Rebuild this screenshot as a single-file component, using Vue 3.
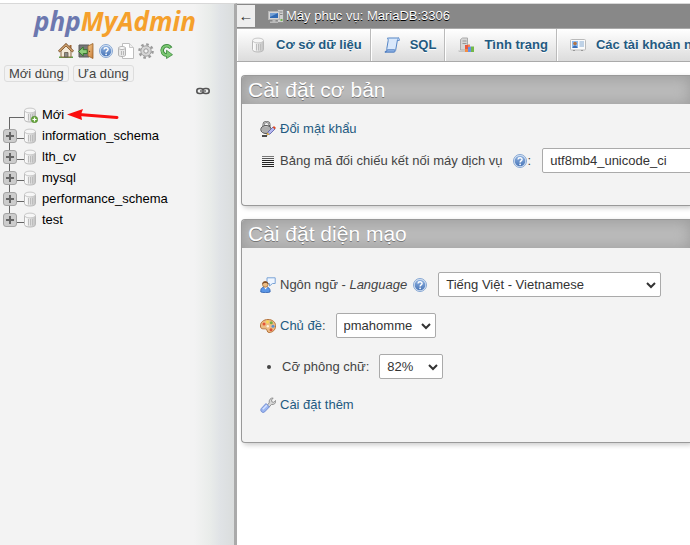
<script setup>
import { ref } from 'vue'

const tools = [
  { icon: 'home', label: 'Trang chủ' },
  { icon: 'exit', label: 'Đăng xuất' },
  { icon: 'help', label: 'Tài liệu phpMyAdmin' },
  { icon: 'docs', label: 'Tài liệu' },
  { icon: 'gear', label: 'Cài đặt bảng điều hướng' },
  { icon: 'reload', label: 'Tải lại' },
]
const databases = ['information_schema', 'lth_cv', 'mysql', 'performance_schema', 'test']
const tabs = [
  { icon: 'db', label: 'Cơ sở dữ liệu' },
  { icon: 'sql', label: 'SQL' },
  { icon: 'status', label: 'Tình trạng' },
  { icon: 'users', label: 'Các tài khoản người dùng' },
]
const collation = ref('utf8mb4_unicode_ci')
const language = ref('Tiếng Việt - Vietnamese')
const theme = ref('pmahomme')
const fontSize = ref('82%')
</script>

<template>
  <svg class="sprite" width="0" height="0" aria-hidden="true">
    <defs>
      <linearGradient id="gCyl" x1="0" x2="1" y1="0" y2="0">
        <stop offset="0" stop-color="#fff" /><stop offset=".45" stop-color="#e8e8e8" /><stop offset="1" stop-color="#c0c0c0" />
      </linearGradient>
      <linearGradient id="gHelp" x1="0" x2="0" y1="0" y2="1">
        <stop offset="0" stop-color="#8fb2e0" /><stop offset="1" stop-color="#4a76b8" />
      </linearGradient>
      <linearGradient id="gWood" x1="0" x2="1" y1="0" y2="1">
        <stop offset="0" stop-color="#f6cf95" /><stop offset="1" stop-color="#c77a34" />
      </linearGradient>
      <symbol id="i-db" viewBox="0 0 16 16">
        <path d="M2.500 3.500v9c0 1.600 2.400 2.500 5.500 2.500s5.500-.9 5.500-2.500v-9z" fill="url(#gCyl)" stroke="#b9b9b9" />
        <ellipse cx="8" cy="3.500" rx="5.500" ry="2.400" fill="#f6f6f6" stroke="#c8c8c8" />
        <path d="M6.500 7v6.500M8.500 7v6.500M10.500 7v6.500" stroke="#bdbdbd" />
      </symbol>
      <symbol id="i-newdb" viewBox="0 0 16 16">
        <use href="#i-db" width="16" height="16" />
        <circle cx="12.500" cy="12.500" r="3.200" fill="#69a83f" stroke="#4b8428" stroke-width=".6" />
        <path d="M12.500 10.500v4M10.500 12.500h4" stroke="#fff" stroke-width="1.200" />
      </symbol>
      <symbol id="i-home" viewBox="0 0 16 16">
        <path d="M1 13.500h14v1.500H1z" fill="#5da047" />
        <path d="M3 8l5-5 5 5v6H3z" fill="#f3ead9" stroke="#8b6a45" />
        <path d="M11.500 2h2v4l-2-2z" fill="#a06838" />
        <path d="M.8 8.600L8 1.600l7.200 7" fill="none" stroke="#7b522c" stroke-width="2.400" />
        <path d="M1.300 8.300L8 1.800l6.700 6.500" fill="none" stroke="#d3a673" stroke-width="1.200" />
        <path d="M6.500 14V9.500h3.500V14z" fill="#8c8c88" stroke="#66594a" stroke-width=".8" />
      </symbol>
      <symbol id="i-exit" viewBox="0 0 16 16">
        <path d="M1 2h10v12H1z" fill="#777" stroke="#5b5b5b" />
        <path d="M10 3l5-2.500v15L10 13z" fill="url(#gWood)" stroke="#9b642d" stroke-width=".8" />
        <circle cx="11.500" cy="8.500" r=".7" fill="#704414" />
        <path d="M.5 8.500L5.200 4v2.700h4v3.800h-4V13z" fill="#8fce7c" stroke="#2e7328" stroke-width=".9" />
      </symbol>
      <symbol id="i-help" viewBox="0 0 16 16">
        <circle cx="8" cy="8" r="6.500" fill="#dbe6f5" stroke="#86a7d3" />
        <circle cx="8" cy="8" r="5.300" fill="url(#gHelp)" />
        <path d="M6 6.500c.1-2.500 4.200-2.300 4.100 0 0 1.400-2 1.400-2 2.900" fill="none" stroke="#fff" stroke-width="1.400" />
        <circle cx="8.100" cy="11.300" r=".9" fill="#fff" />
      </symbol>
      <symbol id="i-docs" viewBox="0 0 16 16">
        <path d="M4.500 .5h7l4 4v11h-11z" fill="#fff" stroke="#bebebe" />
        <path d="M11.500 .5v4h4" fill="#eee" stroke="#c7c7c7" />
        <path d="M.5 5v7c0 1 1.300 1.500 3.500 1.500s3.500-.5 3.500-1.500V5z" fill="#e8e8e8" stroke="#b3b3b3" />
        <ellipse cx="4" cy="5" rx="3.500" ry="1.500" fill="#fafafa" stroke="#b3b3b3" />
        <path d="M3.500 8v4M5.500 8v4" stroke="#b8b8b8" />
      </symbol>
      <symbol id="i-gear" viewBox="0 0 16 16">
        <circle cx="8" cy="8" r="6.600" fill="none" stroke="#9a9a9a" stroke-width="2.400" stroke-dasharray="2.590 2.590" />
        <circle cx="8" cy="8" r="5.200" fill="#d6d6d6" stroke="#a2a2a2" />
        <circle cx="8" cy="8" r="2.200" fill="#f4f4f4" stroke="#999" />
      </symbol>
      <symbol id="i-reload" viewBox="0 0 16 16">
        <path d="M12.800 5.200A4.600 4.600 0 1 0 8.500 12" fill="none" stroke="#3c8a3d" stroke-width="3.600" />
        <path d="M8.500 7.200L14.500 11.700L8.500 15.500z" fill="#7cc873" stroke="#3c8a3d" stroke-width=".8" />
        <path d="M12.300 4.700A4.600 4.600 0 1 0 9 12" fill="none" stroke="#7cc873" stroke-width="1.900" />
      </symbol>
      <symbol id="i-link" viewBox="0 0 16 16">
        <rect x="1.800" y="5.500" width="6.400" height="5" rx="2.500" fill="none" stroke="#555" stroke-width="1.600" />
        <rect x="7.800" y="5.500" width="6.400" height="5" rx="2.500" fill="none" stroke="#555" stroke-width="1.600" />
        <path d="M5 8h6" stroke="#777" stroke-width="1.600" />
      </symbol>
      <symbol id="i-plus" viewBox="0 0 14 14">
        <rect x=".5" y=".5" width="13" height="13" rx="2.500" fill="#ccc" stroke="#a4a4a4" />
        <path d="M7 3v8M3 7h8" stroke="#666" stroke-width="2" />
      </symbol>
      <symbol id="i-server" viewBox="0 0 16 16">
        <path d="M9.500 1.500h6v13h-6z" fill="#cfcfcf" stroke="#8f8f8f" />
        <path d="M11 4h3.500M11 6.500h3.500" stroke="#888" />
        <path d="M12.500 11h2v2h-2z" fill="#70b64e" />
        <rect x=".5" y="3.500" width="11" height="8" fill="#d5d5d5" stroke="#b5b5b5" />
        <rect x="2" y="5" width="8" height="5" fill="#2f69b4" />
        <path d="M2 5h8L2 9z" fill="#739fd4" />
        <path d="M4.500 12h3v1.500H10V15H2v-1.500h2.500z" fill="#bbb" />
      </symbol>
      <symbol id="i-sql" viewBox="0 0 16 16">
        <path d="M4.500 1h10.300c-1.600.8-1.300 2.300-1.700 4l-1.500 8.500c-.2 1-.8 1.500-1.700 1.500H1c1.500-.7 1.600-2 1.800-3.400L4.200 3.500C4.300 2.500 4 1.700 3.500 1z" fill="#d9e8fb" stroke="#5585c5" />
        <path d="M.8 15c1.800 0 2.500-1 2.600-2.300h7.200c-.1 1.400.1 2-.7 2.300z" fill="#8fb4e7" stroke="#4b79bd" stroke-width=".8" />
        <path d="M13 3.500h2.300c.4-1.300 0-2.300-1-2.500" fill="#b6d0f3" stroke="#5585c5" stroke-width=".8" />
      </symbol>
      <symbol id="i-status" viewBox="0 0 16 16">
        <path d="M2.500 2.500l2-1.500h5v12h-7z" fill="#d6d6d6" stroke="#ababab" />
        <path d="M4.500 4h4M4.500 6.500h4" stroke="#999" />
        <path d="M0 13.500h9v1.500H1z" fill="#c4c4c4" />
        <path d="M7 8h3v7H7z" fill="#e8583e" /><path d="M10 9.500h3V15h-3z" fill="#6992e4" />
        <path d="M10 7.500h2v2.500h-2z" fill="#f08154" /><path d="M13 9.500h3V15h-3z" fill="#73b849" />
        <path d="M7 12h3v3H7z" fill="#f58c42" />
      </symbol>
      <symbol id="i-users" viewBox="0 0 16 16">
        <rect x=".5" y="2.500" width="15" height="10.500" rx="1" fill="#fbfbfb" stroke="#bababa" />
        <path d="M2 4h6v7H2z" fill="#8fbcf0" />
        <circle cx="5" cy="6.500" r="1.800" fill="#b57444" /><path d="M2.500 11c.2-3.400 4.800-3.400 5 0z" fill="#3d6fb5" />
        <path d="M9.500 5H14M9.500 7H14M9.500 9H14" stroke="#83a9d2" />
        <path d="M3 13.500h2M11 13.500h2" stroke="#999" />
      </symbol>
      <symbol id="i-passwd" viewBox="0 0 16 16">
        <path d="M3.500 6V4a3 3 0 0 1 6 0v2" fill="none" stroke="#5f5f5f" stroke-width="2" />
        <path d="M3.500 5.500V4a3 3 0 0 1 6 0" fill="none" stroke="#ddd" stroke-width=".8" />
        <ellipse cx="6" cy="8.500" rx="5.200" ry="4" fill="#c9c9c9" stroke="#545454" />
        <path d="M2 7h8M1.500 9h9M3 11h6" stroke="#858585" stroke-width=".8" />
        <path d="M7 14l1-3 5-5 2 2-5 5z" fill="#b4b7ef" stroke="#5459a3" stroke-width=".8" />
        <path d="M12.700 6.300l1.300-1.300 2 2-1.300 1.300z" fill="#e04a24" />
        <path d="M6.500 14.300l1-2.800 2 2z" fill="#e5b33c" /><path d="M2 15h5" stroke="#111" stroke-width="1.500" />
      </symbol>
      <symbol id="i-lines" viewBox="0 0 16 16">
        <path d="M2 3.500h12" stroke="#777" /><path d="M2 5.500h12" stroke="#555" />
        <path d="M2 7.500h12M2 9.500h12M2 11.500h12M2 13.500h12" stroke="#222" />
      </symbol>
      <symbol id="i-lang" viewBox="0 0 16 16">
        <path d="M7 .8h8.200v5.700h-2.700L9.500 9V6.500H7z" fill="#eef5ff" stroke="#7aa3d6" />
        <path d="M.8 15c-.4-4 1.500-5 4.700-5s5 1.500 4.600 5c-2 .8-7.500.8-9.300 0z" fill="#5b96e6" stroke="#2b5eae" stroke-width=".8" />
        <path d="M4 10l1.500 2.500L7.500 10z" fill="#fff" />
        <circle cx="5.300" cy="7.400" r="2.800" fill="#edbd84" stroke="#946233" stroke-width=".7" />
        <path d="M2.300 7.500c-.5-4.500 6.300-4.500 6 0-1.500-1.800-4-2-6 0z" fill="#80502a" />
      </symbol>
      <symbol id="i-theme" viewBox="0 0 16 16">
        <path d="M8 1.500c4.500 0 7.600 2.700 7.600 6.300 0 4.100-3 6.700-6.500 6.700-2.600 0-1.400-3-3-3.500-1.800-.6-5.600 1-5.700-3C.3 4.300 3.600 1.500 8 1.500z" fill="#ecbd85" stroke="#b5733b" />
        <circle cx="4" cy="6" r="1.500" fill="#e55436" /><circle cx="7.500" cy="4" r="1.400" fill="#f7da50" />
        <circle cx="11.300" cy="4.800" r="1.500" fill="#76ad47" /><circle cx="13" cy="8.200" r="1.500" fill="#5b91d3" />
        <circle cx="11" cy="11.700" r="1.500" fill="#d95036" /><circle cx="7.800" cy="8.200" r="1.200" fill="#fff3de" />
      </symbol>
      <symbol id="i-wrench" viewBox="0 0 16 16">
        <path d="M7 8.500l2.200-2.600C8.700 2.900 10.500.7 13.200 1l-1.700 2 .4 1.900 1.900.4 1.900-1.800c.5 2.700-1.600 4.500-4.300 4L8.900 10.300z" fill="#d8d8d8" stroke="#8a8a8a" stroke-width=".9" />
        <path d="M6 6.500l3.400 3.400-4.800 5C2.500 16.600-.4 13.800 1.300 11.500z" fill="#9cb7f1" stroke="#6c88cf" stroke-width=".9" />
        <path d="M2.800 12.300l4-4" stroke="#d6e2ff" stroke-width="1.400" />
      </symbol>
    </defs>
  </svg>

  <div class="page">
    <nav class="sidebar">
      <a class="logo" href="#"><span>php</span>MyAdmin</a>
      <div class="tools">
        <a v-for="t in tools" :key="t.icon" href="#" :aria-label="t.label">
          <svg class="icon"><use :href="'#i-' + t.icon" /></svg>
        </a>
      </div>
      <div class="quick">
        <button type="button">Mới dùng</button>
        <button type="button">Ưa dùng</button>
      </div>
      <a class="sync" href="#" aria-label="Liên kết với bảng chính">
        <svg class="icon"><use href="#i-link" /></svg>
      </a>
      <ul class="tree">
        <li class="first">
          <span class="branch"></span>
          <svg class="icon"><use href="#i-newdb" /></svg>
          <a href="#">Mới</a>
          <svg class="arrow" viewBox="0 0 52 12" aria-hidden="true">
            <path d="M12 5.500L50 8.500" stroke="#fa0f0f" stroke-width="3" stroke-linecap="round" />
            <path d="M0 5.500L16 0l-2 5.500L15 11z" fill="#fa0f0f" />
          </svg>
        </li>
        <li v-for="db in databases" :key="db">
          <button class="expander" type="button" :aria-label="db"><svg><use href="#i-plus" /></svg></button>
          <svg class="icon"><use href="#i-db" /></svg>
          <a href="#">{{ db }}</a>
        </li>
      </ul>
    </nav>

    <main class="content">
      <header class="server">
        <button class="back" type="button">←</button>
        <svg class="icon"><use href="#i-server" /></svg>
        <a href="#">Máy phục vụ: MariaDB:3306</a>
      </header>
      <nav class="tabs">
        <a v-for="t in tabs" :key="t.icon" href="#">
          <svg class="icon"><use :href="'#i-' + t.icon" /></svg>{{ t.label }}
        </a>
      </nav>

      <section class="group">
        <h2>Cài đặt cơ bản</h2>
        <ul class="basic">
          <li><svg class="icon"><use href="#i-passwd" /></svg><a href="#">Đổi mật khẩu</a></li>
          <li>
            <svg class="icon"><use href="#i-lines" /></svg>
            <label for="collation">Bảng mã đối chiếu kết nối máy dịch vụ</label>
            <a class="help colon" href="#" aria-label="Trợ giúp"><svg class="icon"><use href="#i-help" /></svg></a><span>:</span>
            <select id="collation" v-model="collation" class="wide"><option>utf8mb4_unicode_ci</option></select>
          </li>
        </ul>
      </section>

      <section class="group">
        <h2>Cài đặt diện mạo</h2>
        <ul class="look">
          <li>
            <svg class="icon"><use href="#i-lang" /></svg>
            <label for="language">Ngôn ngữ - <i>Language</i></label>
            <a class="help" href="#" aria-label="Trợ giúp"><svg class="icon"><use href="#i-help" /></svg></a>
            <select id="language" v-model="language" class="language"><option>Tiếng Việt - Vietnamese</option></select>
          </li>
          <li>
            <svg class="icon"><use href="#i-theme" /></svg>
            <label for="theme"><a href="#">Chủ đề</a>:</label>
            <select id="theme" v-model="theme" class="theme"><option>pmahomme</option></select>
          </li>
          <li>
            <span class="bullet"></span>
            <label for="fontsize">Cỡ phông chữ:</label>
            <select id="fontsize" v-model="fontSize" class="size"><option>82%</option></select>
          </li>
          <li class="more"><svg class="icon"><use href="#i-wrench" /></svg><a href="#">Cài đặt thêm</a></li>
        </ul>
      </section>
    </main>
  </div>
</template>

<style>
body { background: #fff; }
</style>

<style scoped>
.sprite { position: absolute; }
.page {
  box-sizing: border-box;
  display: grid;
  grid-template-columns: 237px minmax(0, 1fr);
  min-height: 100vh;
  padding-top: 3px;
  font: 13px/16px "Liberation Sans", Arial, sans-serif;
  color: #444;
}
.page ul { list-style: none; margin: 0; padding: 0; }
.page a { color: #235a81; text-decoration: none; }
.page button { font: inherit; cursor: pointer; }
.icon { width: 16px; height: 16px; flex: none; display: block; }

.sidebar {
  border-top: 1px solid #d8d8d8;
  border-right: 3px solid #aaa;
  background: linear-gradient(to left, #dadddd, #e0e3e6 14px, #e9ecea 24px, #f3f3f3 40px);
  display: flex;
  flex-direction: column;
}
.page .logo {
  align-self: center;
  padding-right: 4px;
  font: italic 700 26px/34px "Open Sans", sans-serif;
  color: #f5a02c;
}
.logo span { color: #6c78af; }
.tools { display: flex; justify-content: center; gap: 4px; padding: 5px 2px 0 0; }
.quick { display: flex; gap: 4px; padding: 6px 4px 0; }
.quick button {
  height: 17px;
  padding: 0 4px;
  border: 1px solid #ddd;
  border-radius: 3px;
  background: #f2f2f2;
  color: #444;
  line-height: 15px;
}
.sync { align-self: flex-end; margin: 1px 23px 0 0; }
.page .tree { padding: 5px 0 0 3px; }
.tree li {
  display: flex;
  align-items: center;
  height: 21px;
  background: linear-gradient(#666, #666) 6px 0 / 1px 100% no-repeat, linear-gradient(#666, #666) 6px 13px / 15px 1px no-repeat;
}
.tree .first { background-size: 1px 8px, 15px 1px; background-position: 6px 13px; }
.tree li:last-child { background-size: 1px 12px, 15px 1px; }
.tree a { color: #000; margin-left: 4px; }
.branch { width: 14px; }
.tree .icon { margin-left: 5px; }
.expander { width: 14px; height: 14px; padding: 0; border: 0; background: none; }
.expander svg { display: block; width: 14px; height: 14px; }
.arrow { width: 52px; height: 12px; margin-left: 3px; }

.content { min-width: 0; }
.server {
  display: flex;
  align-items: center;
  height: 24px;
  border-top: 1px solid #d8d8d8;
  background: #888;
  text-shadow: 0 1px 0 #000;
}
.server .icon { margin: 0 2px 0 13px; }
.server a { color: #fff; }
.page .back {
  width: 18px;
  height: 22px;
  padding: 0;
  border: 0;
  background: #eee;
  color: #333;
  font-size: 15px;
}
.tabs {
  display: flex;
  overflow: hidden;
  height: 32px;
  border-top: 1px solid #aaa;
  border-bottom: 1px solid #aaa;
  background: linear-gradient(#fff, #dcdcdc);
}
.tabs a {
  display: flex;
  align-items: center;
  flex: none;
  gap: 10px;
  padding: 0 8px 0 12px;
  border-right: 1px solid #bbb;
  border-left: 1px solid #fff;
  font-weight: 700;
  text-shadow: 0 1px 0 #fff;
  white-space: nowrap;
}

.group {
  margin: 13px 0 0 4px;
  border: 1px solid #999;
  border-right: 0;
  border-radius: 4px 0 0 4px;
  background: #f3f3f3;
  box-shadow: 2px 2px 5px #ccc;
}
.group h2 {
  margin: 0;
  padding: 0 6px;
  border-radius: 3px 0 0 0;
  background: #bbb;
  box-shadow: inset 1px 1px 15px #999;
  color: #fff;
  font-size: 21px;
  line-height: 28px;
  font-weight: 400;
  text-shadow: 0 1px 0 #777;
}
.group .look { padding: 24px 0 27px 18px; display: flex; flex-direction: column; gap: 16px; }
.group .basic { padding: 17px 0 32px 18px; display: flex; flex-direction: column; gap: 11px; }
.group li { display: flex; align-items: center; white-space: nowrap; }
.group .more { height: 20px; }
.group li > .icon { margin-right: 4px; }
.help { margin: 0 10px 0 5px; }
.help.colon { margin: 0 0 0 9px; }
.group select {
  appearance: none;
  box-sizing: border-box;
  height: 25px;
  padding: 0 8px 0 7px;
  border: 1px solid #aaa;
  border-radius: 2px;
  background: #fff;
  color: #333;
  font: inherit;
}
.group .wide { flex: 1 0 210px; margin-left: 11px; }
.group .language { width: 223px; }
.group .theme { width: 100px; margin-left: 10px; }
.group .size { width: 64px; margin-left: 10px; }
.group .language, .group .theme, .group .size {
  background: url("data:image/svg+xml,%3Csvg xmlns='http://www.w3.org/2000/svg' width='10' height='8'%3E%3Cpath d='M1 2l4 4 4-4' fill='none' stroke='%23333' stroke-width='2'/%3E%3C/svg%3E") right 4px center no-repeat #fff;
}
.bullet { width: 4px; height: 4px; margin: 0 11px 0 7px; border-radius: 50%; background: #444; }
</style>
